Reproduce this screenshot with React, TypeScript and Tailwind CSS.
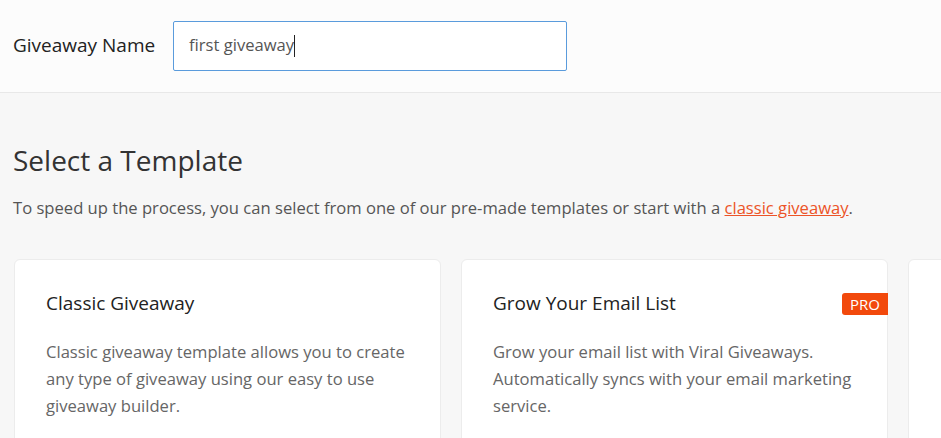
import React from 'react';

interface TemplateCardProps {
  title: string;
  description: string;
  pro?: boolean;
}

function TemplateCard({ title, description, pro }: TemplateCardProps) {
  return (
    <div className="relative w-[427px] h-[260px] shrink-0 bg-white border border-[#ececec] rounded-md pl-[31px] pr-8 pt-[30px]">
      {pro && (
        <span className="absolute right-[-1px] top-[33px] h-[22px] px-[8px] flex items-center bg-[#f2490c] text-white text-[15px] rounded-l-[3px]">
          PRO
        </span>
      )}
      <h3 className="text-[19px] leading-[26px] text-[#222]">{title}</h3>
      <p className="mt-[22px] text-[16.6px] leading-[27px] text-[#666]">{description}</p>
    </div>
  );
}

export default function App() {
  return (
    <div className="w-[941px] h-[438px] overflow-hidden bg-[#f7f7f7] font-['Open_Sans',sans-serif]">
      <div className="h-[93px] flex items-center bg-[#fcfcfc] border-b border-[#e8e8e8] px-[13px]">
        <label className="text-[19px] text-[#222] w-[160px] -mt-[1px]">Giveaway Name</label>
        <div className="w-[394px] h-[50px] flex items-center bg-white border border-[#5a9bdc] rounded-[2px] px-[15px] -mt-[1px]">
          <span className="text-[16.6px] text-[#555]">first giveaway</span>
          <span className="w-px h-[22px] bg-[#222]" />
        </div>
      </div>
      <div className="px-[13px]">
        <h1 className="mt-[49px] text-[28px] leading-[36px] text-[#333]">Select a Template</h1>
        <p className="mt-[18px] text-[16.6px] leading-[24px] text-[#555]">
          To speed up the process, you can select from one of our pre-made templates or start with a{' '}
          <a className="text-[#ec5428] underline">classic giveaway</a>.
        </p>
        <div className="mt-[39px] flex gap-[20px] pl-px">
          <TemplateCard
            title="Classic Giveaway"
            description="Classic giveaway template allows you to create any type of giveaway using our easy to use giveaway builder."
          />
          <TemplateCard
            title="Grow Your Email List"
            description="Grow your email list with Viral Giveaways. Automatically syncs with your email marketing service."
            pro
          />
          <TemplateCard title="" description="" />
        </div>
      </div>
    </div>
  );
}
